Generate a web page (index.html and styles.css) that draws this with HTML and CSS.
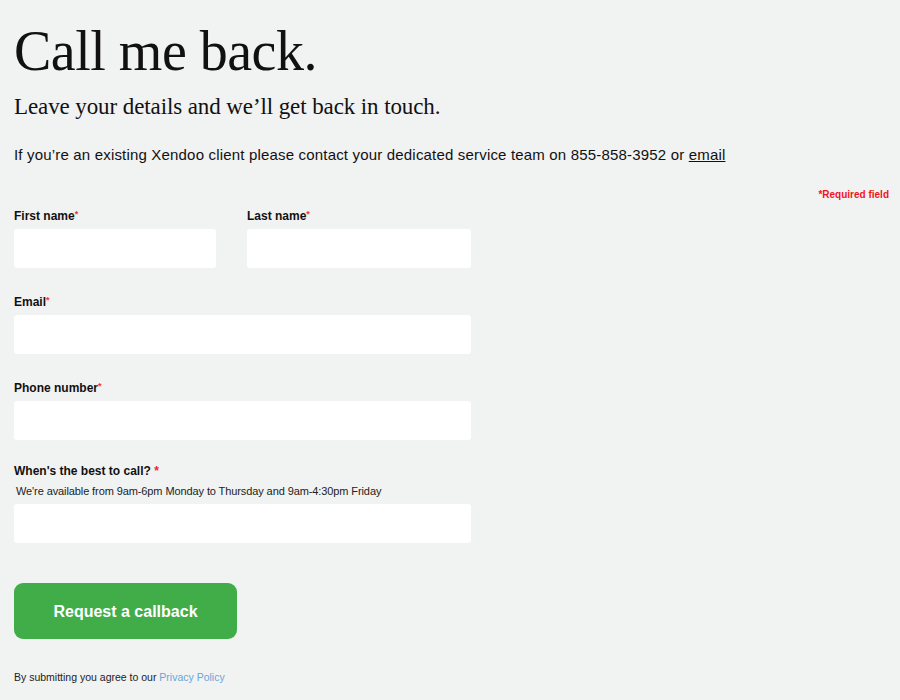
FILE: index.html
```html
<!DOCTYPE html>
<html lang="en">
<head>
<meta charset="utf-8">
<title>Call me back</title>
<link rel="stylesheet" href="styles.css">
</head>
<body>
<main class="page">
  <h1 class="title">Call me back.</h1>
  <p class="subtitle">Leave your details and we’ll get back in touch.</p>
  <p class="intro">If you’re an existing Xendoo client please contact your dedicated service team on 855-858-3952 or <a href="#" class="intro-link">email</a></p>
  <p class="required-note">*Required field</p>
  <form class="form">
    <div class="row">
      <div class="field field-first">
        <label class="label">First name<span class="star">*</span></label>
        <input class="input" type="text">
      </div>
      <div class="field field-last">
        <label class="label">Last name<span class="star">*</span></label>
        <input class="input" type="text">
      </div>
    </div>
    <div class="field">
      <label class="label">Email<span class="star">*</span></label>
      <input class="input" type="email">
    </div>
    <div class="field">
      <label class="label">Phone number<span class="star">*</span></label>
      <input class="input" type="tel">
    </div>
    <div class="field field-call">
      <label class="label">When's the best to call? <span class="star star-big">*</span></label>
      <p class="helper">We're available from 9am-6pm Monday to Thursday and 9am-4:30pm Friday</p>
      <input class="input" type="text">
    </div>
    <button class="submit" type="button">Request a callback</button>
    <p class="terms">By submitting you agree to our <a href="#" class="terms-link">Privacy Policy</a></p>
  </form>
</main>
</body>
</html>
```
FILE: styles.css
```css
* { box-sizing: border-box; }
html, body { margin: 0; padding: 0; }
body {
  background: #f1f2f2;
  color: #111;
  font-family: "Liberation Sans", Arial, sans-serif;
}
.page {
  padding: 21px 11px 0 14px;
  display: flex;
  flex-direction: column;
}
.title {
  margin: 0;
  font-family: "Liberation Serif", "Times New Roman", serif;
  font-weight: 400;
  font-size: 56px;
  line-height: 60px;
  letter-spacing: -0.5px;
  color: #111;
}
.subtitle {
  margin: 12px 0 0;
  font-family: "Liberation Serif", "Times New Roman", serif;
  font-size: 23px;
  line-height: 28px;
  letter-spacing: -0.1px;
  color: #111;
}
.intro {
  margin: 24px 0 0;
  font-size: 15px;
  line-height: 20px;
  letter-spacing: 0.18px;
  color: #111;
}
.intro-link { color: #111; text-decoration: underline; }
.required-note {
  margin: 23px 0 0;
  align-self: flex-end;
  font-size: 10px;
  line-height: 14px;
  font-weight: 700;
  color: #f0141e;
}
.form {
  margin-top: 6px;
  width: 457px;
  display: flex;
  flex-direction: column;
}
.row {
  display: flex;
  gap: 31px;
}
.field {
  display: flex;
  flex-direction: column;
  margin-bottom: 26px;
}
.field-first { width: 202px; }
.field-last { flex: 1; }
.field-call { margin-top: -3px; }
.label {
  font-size: 12px;
  line-height: 16px;
  font-weight: 700;
  color: #111;
  margin-bottom: 5px;
}
.star {
  color: #ee3340;
  font-size: 9px;
  vertical-align: top;
  line-height: 12px;
}
.star-big { font-size: 12px; line-height: 16px; color: #e8262f; vertical-align: baseline; }
.helper {
  margin: 0 0 6px 2px;
  font-size: 11px;
  line-height: 14px;
  letter-spacing: -0.1px;
  color: #222;
}
.input {
  height: 39px;
  border: none;
  border-radius: 3px;
  background: #fff;
  width: 100%;
  font: inherit;
}
.submit {
  margin-top: 14px;
  width: 223px;
  height: 56px;
  padding-top: 2px;
  border: none;
  border-radius: 9px;
  background: #41ad49;
  color: #fff;
  font-family: "Liberation Sans", Arial, sans-serif;
  font-size: 16px;
  font-weight: 700;
}
.terms {
  margin: 31px 0 0;
  font-size: 10.5px;
  line-height: 14px;
  color: #222;
}
.terms-link { color: #6aa6d6; text-decoration: none; }
```
